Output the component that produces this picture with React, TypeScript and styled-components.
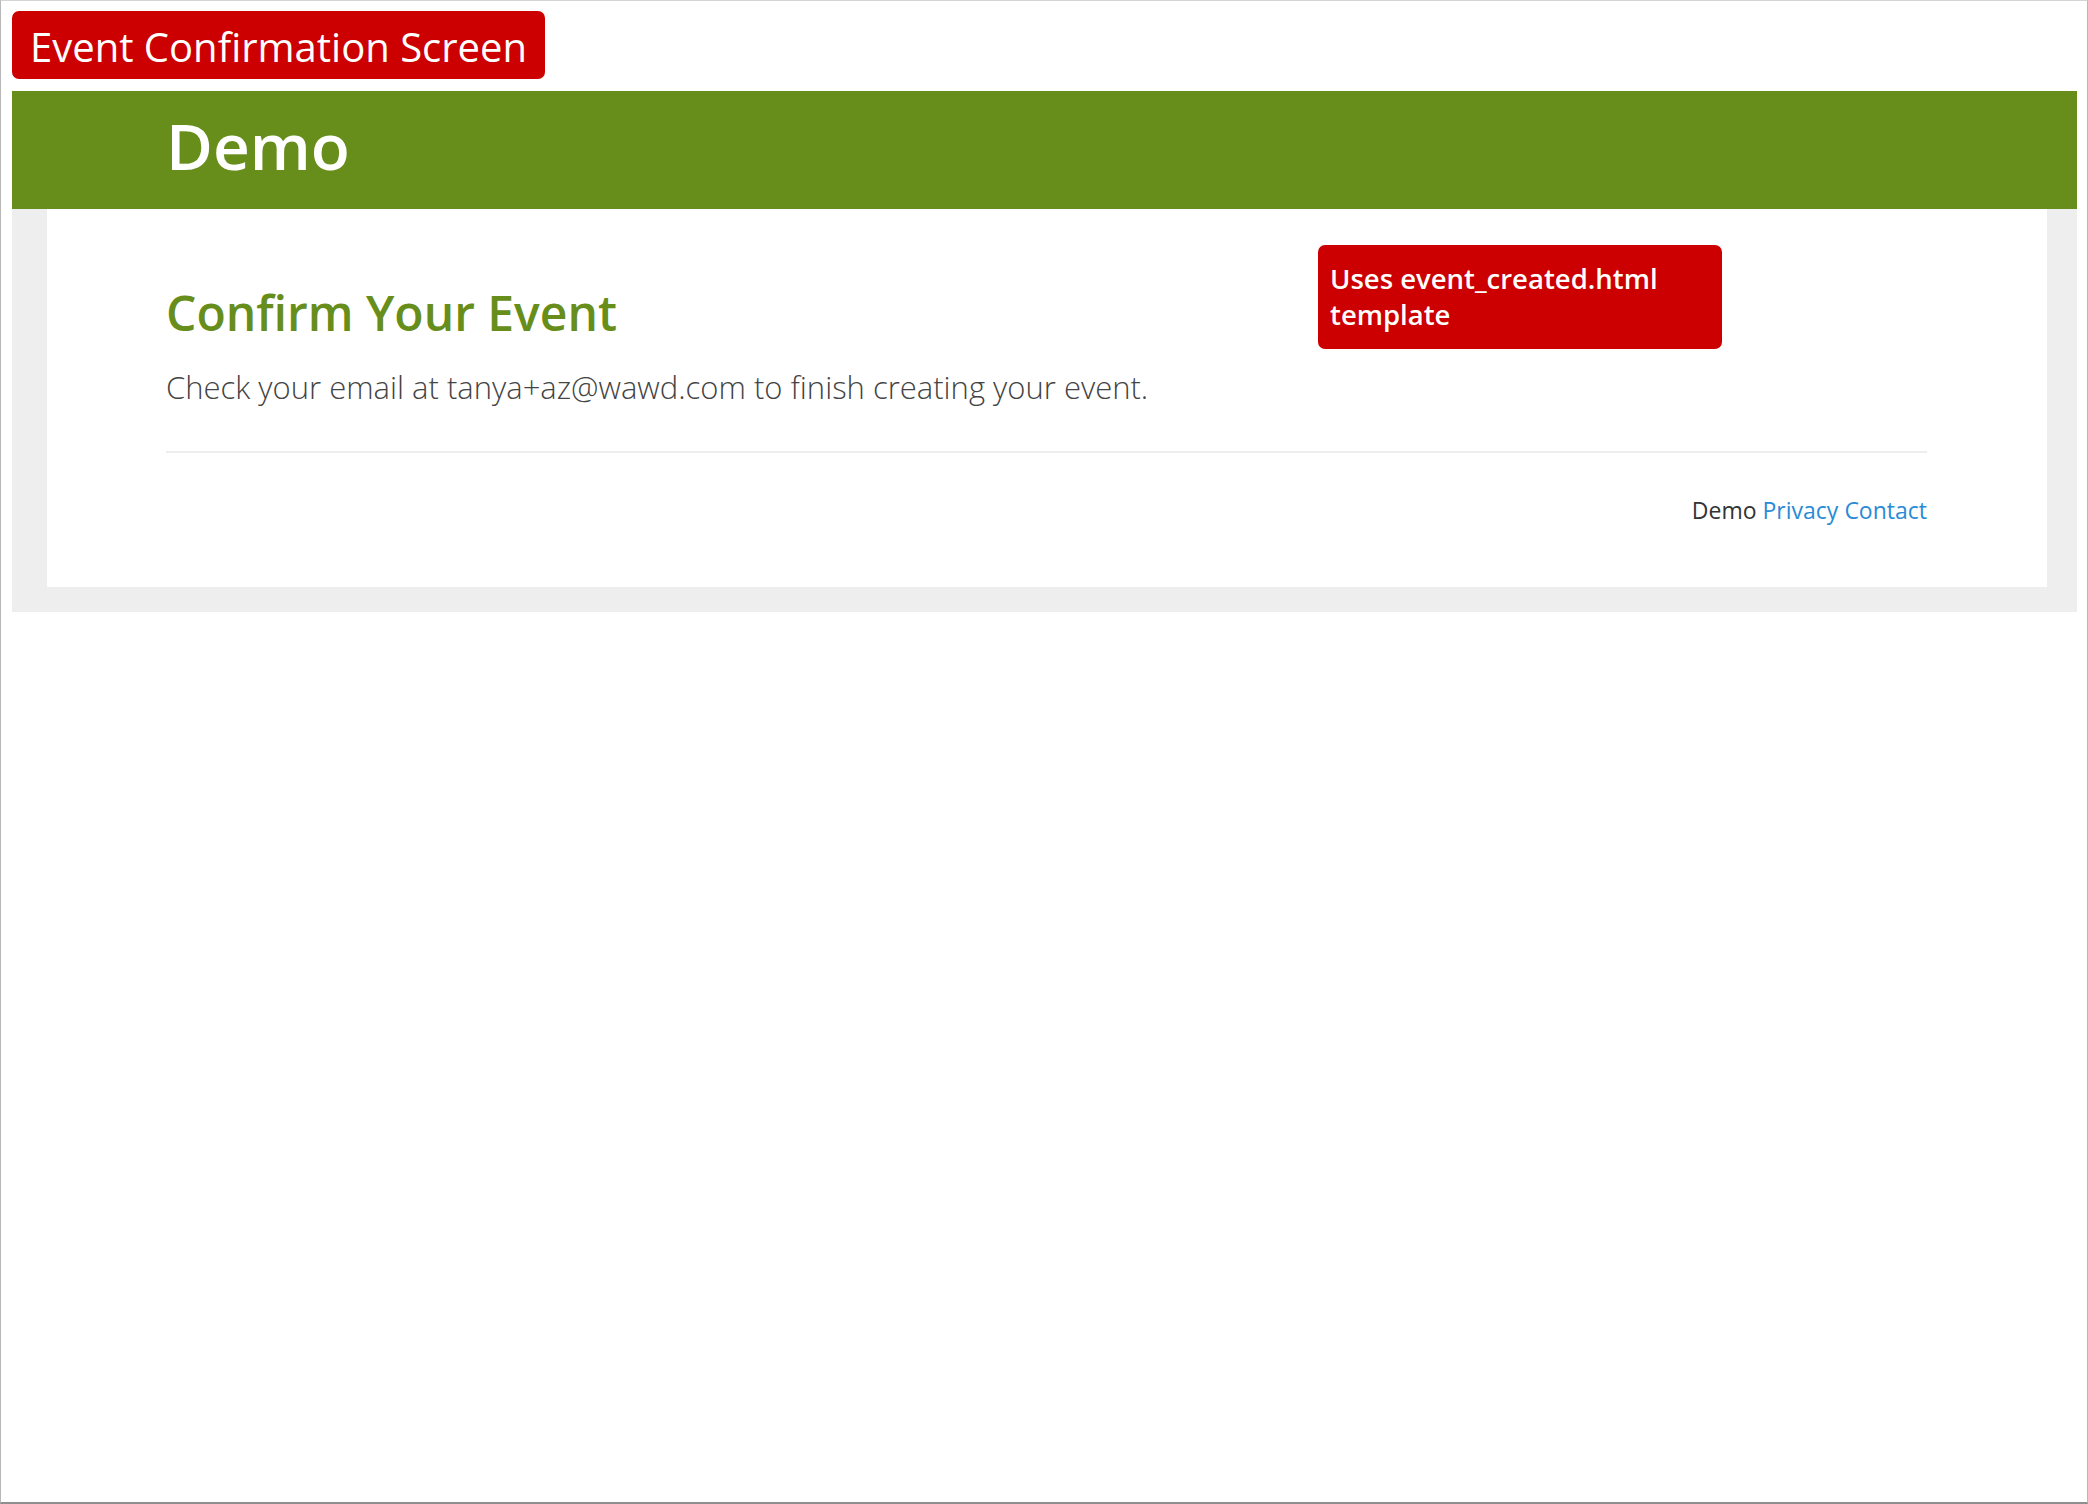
import styled, { createGlobalStyle } from "styled-components";

const GlobalStyle = createGlobalStyle`
  html, body {
    margin: 0;
    padding: 0;
    background: #ffffff;
  }
  body {
    font-family: "Open Sans", "Liberation Sans", sans-serif;
  }
  * {
    box-sizing: border-box;
  }
`;

export default function App() {
  return (
    <>
      <GlobalStyle />
      <Frame>
        <Label>Event Confirmation Screen</Label>
        <Header>
          <SiteTitle>Demo</SiteTitle>
        </Header>
        <Wrap>
          <Panel>
            <Callout>
              Uses event_created.html
              <br />
              template
            </Callout>
            <Heading>Confirm Your Event</Heading>
            <Message>
              Check your email at tanya+az@wawd.com to finish creating your event.
            </Message>
            <Divider />
            <Footer>
              Demo <Link href="#">Privacy</Link> <Link href="#">Contact</Link>
            </Footer>
          </Panel>
        </Wrap>
      </Frame>
    </>
  );
}

const Frame = styled.div`
  height: 1504px;
  width: 2088px;
  border: 1px solid #d4d4d4;
  border-left-color: #b8b8b8;
  border-right-color: #b8b8b8;
  border-bottom: 2px solid #8f8f8f;
  padding: 10px 10px 0 11px;
  display: flex;
  flex-direction: column;
  align-items: flex-start;
`;

const Label = styled.div`
  background: #cc0000;
  color: #ffffff;
  font-size: 40px;
  line-height: 65px;
  height: 68px;
  padding: 3px 18px 0;
  border-radius: 7px;
`;

const Header = styled.div`
  align-self: stretch;
  margin-top: 12px;
  height: 118px;
  background: #678d1b;
  display: flex;
  align-items: center;
  padding: 0 0 8px 154px;
`;

const SiteTitle = styled.h1`
  margin: 0;
  color: #ffffff;
  font-size: 64px;
  font-weight: 600;
  line-height: 1;
`;

const Wrap = styled.div`
  align-self: stretch;
  background: #eeeeee;
  padding: 0 30px 25px 35px;
`;

const Panel = styled.div`
  position: relative;
  background: #ffffff;
  padding: 78px 120px 60px 119px;
`;

const Callout = styled.div`
  position: absolute;
  left: 1271px;
  top: 36px;
  width: 404px;
  height: 104px;
  background: #cc0000;
  color: #ffffff;
  border-radius: 7px;
  padding: 16px 12px 0 12px;
  font-size: 27.5px;
  font-weight: 600;
  line-height: 36px;
`;

const Heading = styled.h2`
  margin: 0;
  color: #678d1b;
  font-size: 48px;
  font-weight: 600;
  line-height: 1.1;
`;

const Message = styled.p`
  margin: 25px 0 0;
  color: #444444;
  font-size: 31px;
  font-weight: 300;
  line-height: 45px;
`;

const Divider = styled.hr`
  margin: 41px 0 0;
  border: 0;
  border-top: 2px solid #eeeeee;
`;

const Footer = styled.div`
  margin-top: 40px;
  text-align: right;
  color: #333333;
  font-size: 23px;
  font-weight: 400;
  line-height: 34px;
`;

const Link = styled.a`
  color: #2a8bd6;
  text-decoration: none;
`;
